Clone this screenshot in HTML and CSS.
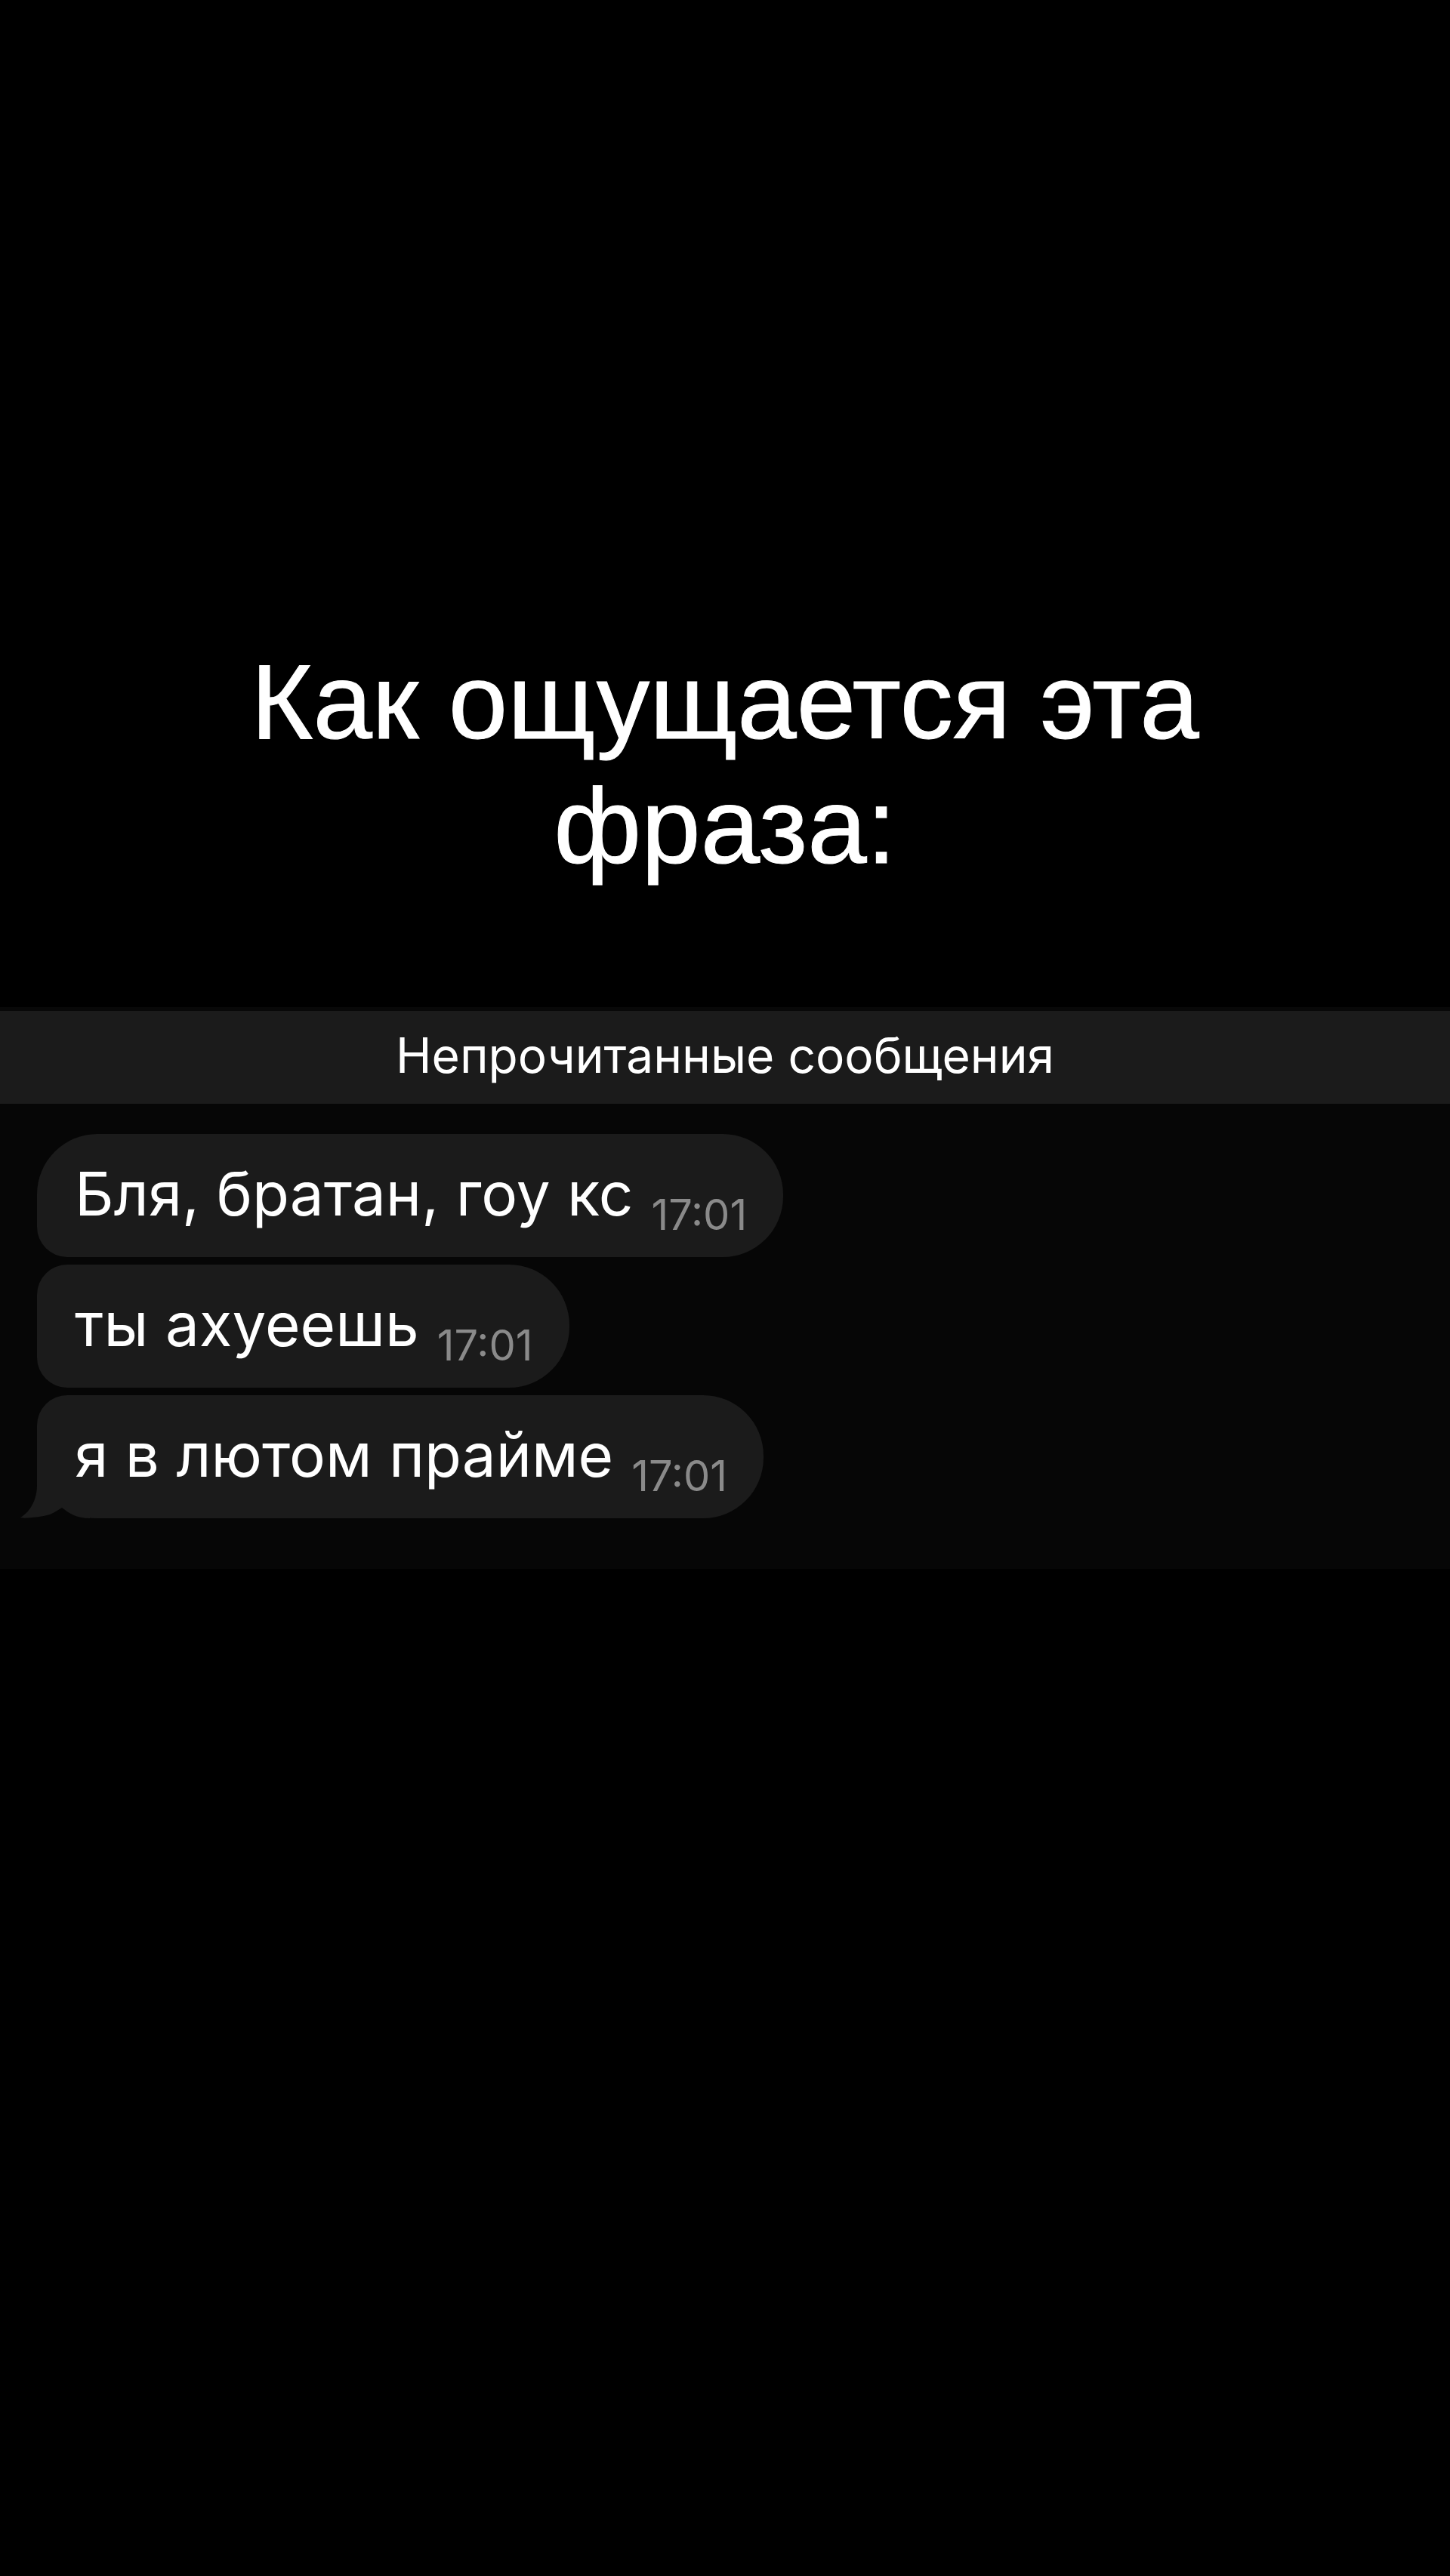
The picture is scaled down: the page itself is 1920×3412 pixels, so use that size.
FILE: index.html
```html
<!DOCTYPE html>
<html lang="ru">
<head>
    <meta charset="UTF-8">
    <meta name="viewport" content="width=device-width, initial-scale=1.0">
    <title>Непрочитанные сообщения</title>
    <link rel="stylesheet" href="styles.css">
</head>
<body>
    <main>
        <h1>Как ощущается эта фраза:</h1>

        <section class="chat">
            <h2 class="unread">Непрочитанные сообщения</h2>

            <ul class="messages">
                <li class="message first">
                    <p>Бля, братан, гоу кс</p>
                    <time>17:01</time>
                </li>
                <li class="message">
                    <p>ты ахуеешь</p>
                    <time>17:01</time>
                </li>
                <li class="message last">
                    <p>я в лютом прайме</p>
                    <time>17:01</time>
                    <svg class="tail" width="92" height="90" viewBox="0 0 92 90" aria-hidden="true">
                        <path d="M22 0V46C22 64 14 81 0 89C4 91 30 88 39 85C46 82 50 79 55 76C64 83 74 90 92 90V56H40V0Z" fill="#1b1b1b"/>
                    </svg>
                </li>
            </ul>
        </section>
    </main>
</body>
</html>
```

FILE: styles.css
```css
body {
    margin: 0;
    min-height: 100vh;
    background-color: #000;
    color: #fff;
    font-family: Inter, "Noto Sans", sans-serif;
}

main {
    padding-top: 847px;
}

h1 {
    margin: 0 160px 157px;
    font-family: "Liberation Sans", Arial, sans-serif;
    font-size: 141px;
    font-weight: normal;
    line-height: 165px;
    text-align: center;
    -webkit-text-stroke: 1px #fff;
}

.chat {
    background-color: #060606;
    border-top: 5px solid #080808;
}

.unread {
    margin: 0;
    padding: 21px 20px 26px;
    background-color: #1b1b1b;
    font-size: 64px;
    font-weight: normal;
    line-height: 76px;
    text-align: center;
}

.messages {
    display: flex;
    flex-direction: column;
    align-items: flex-start;
    gap: 10px;
    margin: 0;
    padding: 40px 49px 67px;
    list-style: none;
}

.message {
    position: relative;
    display: flex;
    align-items: flex-end;
    gap: 24px;
    padding: 23px 48px 28px 50px;
    background-color: #1b1b1b;
    border-radius: 40px 80px 80px 40px;
}

.message p {
    margin: 0;
    font-size: 80px;
    line-height: 112px;
}

.message time {
    color: #8a8a8a;
    font-size: 56px;
    line-height: 56px;
}

.first {
    border-top-left-radius: 80px;
}

.last {
    border-bottom-left-radius: 80px;
}

/* pointed corner of the last bubble */
.tail {
    position: absolute;
    left: -22px;
    bottom: 0;
}
```
